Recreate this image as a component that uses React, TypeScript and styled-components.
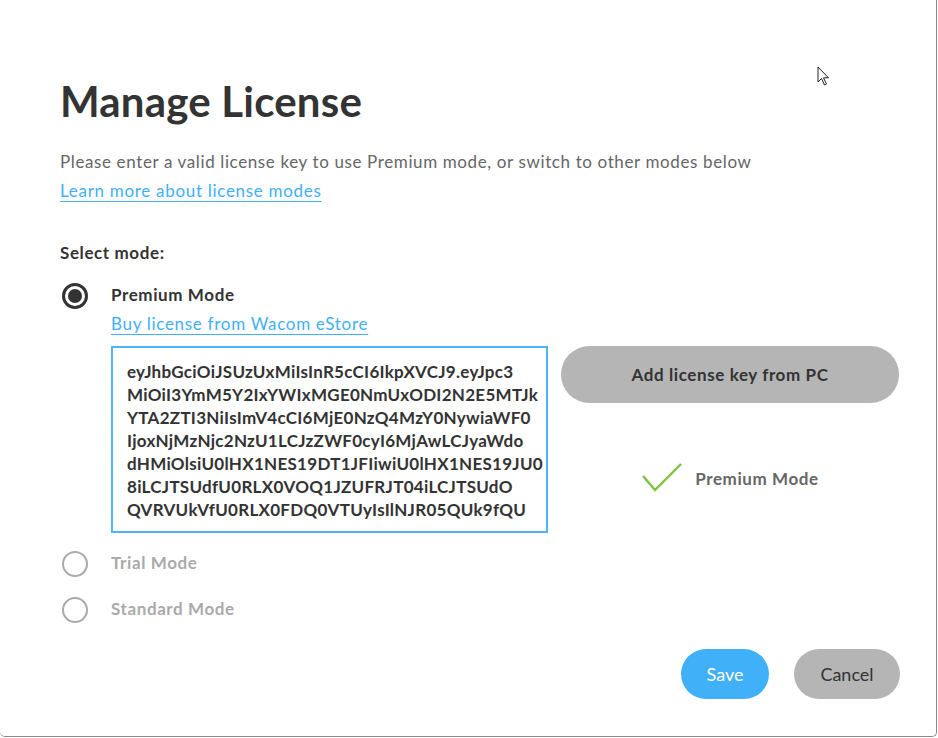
import React, { useState } from 'react';
import styled, { createGlobalStyle } from 'styled-components';

const GlobalStyle = createGlobalStyle`
  html, body {
    margin: 0;
    padding: 0;
    background: #ffffff;
  }
  body {
    font-family: Lato, "Noto Sans", "Liberation Sans", sans-serif;
    color: #333333;
  }
`;

const Window = styled.div`
  position: relative;
  box-sizing: border-box;
  width: 937px;
  height: 737px;
  background: #ffffff;
  border-right: 1px solid #8a8a8a;
  border-bottom: 1px solid #8a8a8a;
  border-radius: 0 0 5px 5px;
  padding: 75px 36px 0 60px;
  display: flex;
  flex-direction: column;
`;

const Title = styled.h1`
  margin: 0 0 -1px;
  font-size: 42px;
  line-height: 52px;
  font-weight: 700;
  color: #333333;
  letter-spacing: 0.2px;
`;

const Description = styled.p`
  margin: 22px 0 0;
  font-size: 17px;
  line-height: 28px;
  color: #666666;
  letter-spacing: 0.62px;
`;

const Link = styled.a<{ $mt?: number }>`
  display: block;
  align-self: flex-start;
  margin-top: ${(p) => p.$mt ?? 0}px;
  font-size: 17px;
  line-height: 28px;
  color: #42affa;
  letter-spacing: 0.7px;
  text-decoration: underline;
  text-decoration-thickness: 1px;
  text-underline-offset: 4px;
  cursor: pointer;
`;

const SectionLabel = styled.div`
  margin-top: 34px;
  font-size: 17px;
  line-height: 28px;
  font-weight: 700;
  color: #333333;
  letter-spacing: 0.6px;
`;

const ModeRow = styled.div<{ $mt: number }>`
  display: flex;
  align-items: flex-start;
  margin-top: ${(p) => p.$mt}px;
`;

const Radio = styled.span<{ $checked?: boolean }>`
  box-sizing: border-box;
  flex: none;
  width: 26px;
  height: 26px;
  margin: 2px 0 0 2px;
  border-radius: 50%;
  border: ${(p) => (p.$checked ? '3px solid #333333' : '2px solid #aaaaaa')};
  display: flex;
  align-items: center;
  justify-content: center;
  &::after {
    content: '';
    display: ${(p) => (p.$checked ? 'block' : 'none')};
    width: 14px;
    height: 14px;
    border-radius: 50%;
    background: #333333;
  }
`;

const ModeBody = styled.div`
  margin-left: 23px;
  display: flex;
  flex-direction: column;
`;

const ModeLabel = styled.div<{ $disabled?: boolean }>`
  font-size: 17px;
  line-height: 28px;
  font-weight: 700;
  letter-spacing: 0.6px;
  color: ${(p) => (p.$disabled ? '#aaaaaa' : '#333333')};
`;

const KeyArea = styled.div`
  display: flex;
  margin-top: 8px;
  gap: 13px;
`;

const KeyBox = styled.div`
  box-sizing: border-box;
  width: 437px;
  height: 187px;
  border: 2px solid #4db4f6;
  padding: 12px 4px 0 14px;
  font-size: 17px;
  line-height: 23px;
  font-weight: 700;
  letter-spacing: 0.28px;
  color: #333333;
  white-space: pre;
  overflow: hidden;
`;

const SideColumn = styled.div`
  display: flex;
  flex-direction: column;
  align-items: center;
`;

const PillButton = styled.button<{ $variant: 'primary' | 'neutral'; $w: number; $h: number }>`
  width: ${(p) => p.$w}px;
  height: ${(p) => p.$h}px;
  border: none;
  border-radius: ${(p) => p.$h / 2}px;
  background: ${(p) => (p.$variant === 'primary' ? '#40b0f8' : '#b5b5b5')};
  color: ${(p) => (p.$variant === 'primary' ? '#ffffff' : '#333333')};
  font-family: inherit;
  cursor: pointer;
  padding: 0;
`;

const AddKeyButton = styled(PillButton)`
  font-size: 17px;
  font-weight: 700;
  letter-spacing: 0.6px;
`;

const Status = styled.div`
  display: flex;
  align-items: center;
  margin-top: 59px;
  gap: 12px;
  font-size: 17px;
  font-weight: 700;
  letter-spacing: 0.6px;
  color: #666666;
`;

const Footer = styled.div`
  display: flex;
  justify-content: flex-end;
  gap: 25px;
  margin-top: 26px;
`;

const FooterButton = styled(PillButton)`
  font-size: 18px;
  font-weight: 400;
`;

const Cursor = styled.svg`
  position: absolute;
  left: 817px;
  top: 66px;
`;

const keyLines = [
  'eyJhbGciOiJSUzUxMiIsInR5cCI6IkpXVCJ9.eyJpc3',
  'MiOiI3YmM5Y2IxYWIxMGE0NmUxODI2N2E5MTJk',
  'YTA2ZTI3NiIsImV4cCI6MjE0NzQ4MzY0NywiaWF0',
  'IjoxNjMzNjc2NzU1LCJzZWF0cyI6MjAwLCJyaWdo',
  'dHMiOlsiU0lHX1NES19DT1JFIiwiU0lHX1NES19JU0',
  '8iLCJTSUdfU0RLX0VOQ1JZUFRJT04iLCJTSUdO',
  'QVRVUkVfU0RLX0FDQ0VTUyIsIlNJR05QUk9fQU',
];

const App = () => {
  const [mode] = useState('premium');

  return (
    <>
      <GlobalStyle />
      <Window>
        <Title>Manage License</Title>
        <Description>
          Please enter a valid license key to use Premium mode, or switch to other modes below
        </Description>
        <Link $mt={1}>Learn more about license modes</Link>
        <SectionLabel>Select mode:</SectionLabel>

        <ModeRow $mt={14}>
          <Radio $checked={mode === 'premium'} />
          <ModeBody>
            <ModeLabel>Premium Mode</ModeLabel>
            <Link $mt={1}>Buy license from Wacom eStore</Link>
            <KeyArea>
              <KeyBox>{keyLines.join('\n')}</KeyBox>
              <SideColumn>
                <AddKeyButton $variant="neutral" $w={338} $h={57}>
                  Add license key from PC
                </AddKeyButton>
                <Status>
                  <svg width="42" height="32" viewBox="0 0 42 32">
                    <polyline
                      points="2,14 14,28 40,2"
                      fill="none"
                      stroke="#7dc243"
                      strokeWidth="2.4"
                    />
                  </svg>
                  Premium Mode
                </Status>
              </SideColumn>
            </KeyArea>
          </ModeBody>
        </ModeRow>

        <ModeRow $mt={16}>
          <Radio $checked={mode === 'trial'} />
          <ModeBody>
            <ModeLabel $disabled>Trial Mode</ModeLabel>
          </ModeBody>
        </ModeRow>

        <ModeRow $mt={18}>
          <Radio $checked={mode === 'standard'} />
          <ModeBody>
            <ModeLabel $disabled>Standard Mode</ModeLabel>
          </ModeBody>
        </ModeRow>

        <Footer>
          <FooterButton $variant="primary" $w={88} $h={50}>
            Save
          </FooterButton>
          <FooterButton $variant="neutral" $w={106} $h={50}>
            Cancel
          </FooterButton>
        </Footer>

        <Cursor width="14" height="21" viewBox="0 0 14 21">
          <path
            d="M1 1 L1 16 L4.5 12.5 L7.5 19 L9.5 18 L6.5 11.8 L11.5 11.8 Z"
            fill="#ffffff"
            stroke="#222222"
            strokeWidth="1"
            strokeLinejoin="round"
          />
        </Cursor>
      </Window>
    </>
  );
};

export default App;
